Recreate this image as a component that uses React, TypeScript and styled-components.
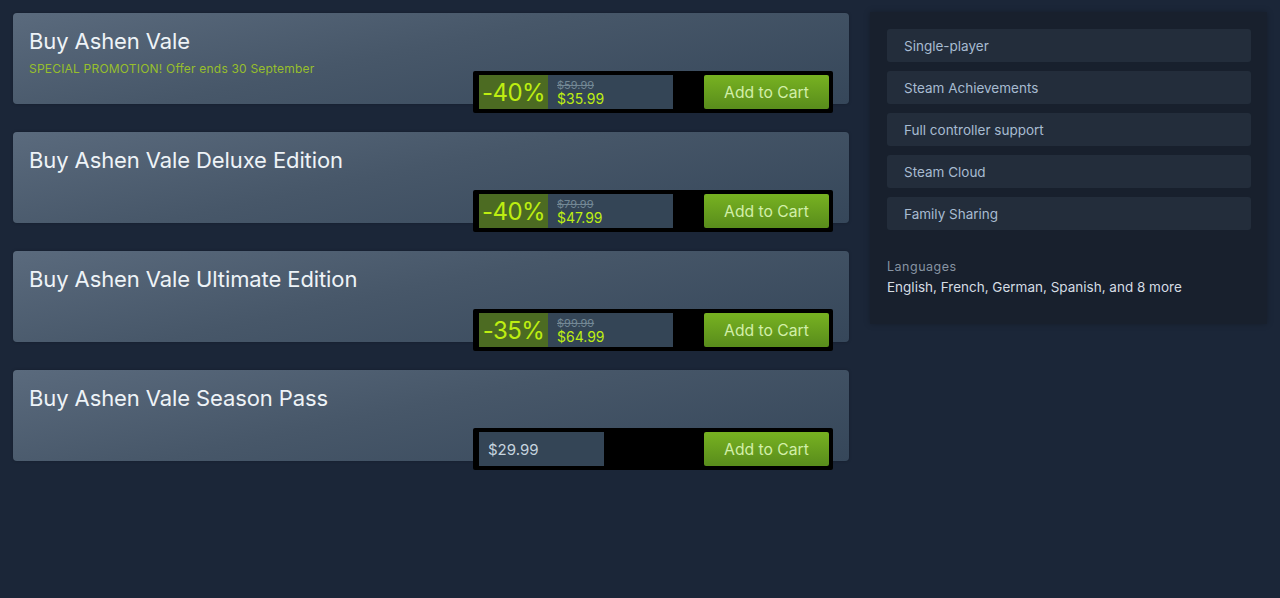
import styled, { createGlobalStyle } from 'styled-components';

const GlobalStyle = createGlobalStyle`
  html, body {
    margin: 0;
    padding: 0;
    background: #1b2638;
    font-family: Inter, "Noto Sans", sans-serif;
  }
`;

const Page = styled.div`
  display: flex;
  gap: 21px;
  padding: 13px 13px 0 13px;
  min-height: 598px;
  box-sizing: border-box;
  align-items: flex-start;
`;

const PurchaseColumn = styled.div`
  width: 836px;
  display: flex;
  flex-direction: column;
  gap: 28px;
`;

const PurchaseCard = styled.div`
  position: relative;
  height: 91px;
  box-sizing: border-box;
  padding: 15px 16px;
  border-radius: 4px;
  background: linear-gradient(168deg, #5a6a7d 0%, #475769 45%, #36475a 100%);
  box-shadow: 0 0 3px rgba(0, 0, 0, 0.25);
`;

const CardTitle = styled.h1`
  margin: 0;
  font-size: 22px;
  font-weight: 400;
  line-height: 26px;
  letter-spacing: -0.1px;
  color: #eef3f7;
`;

const PromoNote = styled.div`
  margin-top: 7px;
  font-size: 12px;
  letter-spacing: 0.2px;
  color: #97bf2c;
`;

const ActionBar = styled.div`
  position: absolute;
  right: 16px;
  bottom: -9px;
  width: 360px;
  height: 42px;
  box-sizing: border-box;
  padding: 4px 4px 4px 6px;
  background: #000;
  border-radius: 2px;
  display: flex;
  align-items: stretch;
  justify-content: space-between;
`;

const PriceGroup = styled.div`
  display: flex;
`;

const DiscountPct = styled.div`
  width: 69px;
  background: #4c6b22;
  color: #beee11;
  font-size: 24px;
  line-height: 35px;
  text-align: center;
  letter-spacing: -0.6px;
`;

const PriceBox = styled.div<{ $single?: boolean }>`
  width: 125px;
  box-sizing: border-box;
  background: #344556;
  padding: 0 9px;
  display: flex;
  flex-direction: column;
  justify-content: center;
  ${p => p.$single && 'font-size: 15px; color: #c6d4df;'}
`;

const OriginalPrice = styled.div`
  font-size: 11px;
  line-height: 12px;
  margin-top: 2px;
  color: #738895;
  text-decoration: line-through;
`;

const FinalPrice = styled.div`
  font-size: 14px;
  line-height: 16px;
  color: #beee11;
`;

const CartButton = styled.button`
  width: 125px;
  border: none;
  border-radius: 2px;
  background: linear-gradient(to bottom, #76b021 5%, #5a8e1c 95%);
  color: #d2efa9;
  font-family: inherit;
  font-size: 15.7px;
  padding: 0;
  cursor: pointer;
`;

const Sidebar = styled.div`
  width: 397px;
  margin-top: -1px;
  box-sizing: border-box;
  padding: 17px 16px 29px 17px;
  background: #18202d;
  box-shadow: 0 0 6px rgba(0, 0, 0, 0.25);
`;

const FeatureList = styled.div`
  display: flex;
  flex-direction: column;
  gap: 9px;
`;

const FeatureItem = styled.div`
  height: 33px;
  box-sizing: border-box;
  padding: 0 17px;
  border-radius: 3px;
  background: #232d3b;
  color: #a7bbd1;
  font-size: 13.5px;
  display: flex;
  align-items: center;
`;

const LangLabel = styled.div`
  margin-top: 29px;
  font-size: 12.5px;
  letter-spacing: 0.5px;
  color: #8794a3;
`;

const LangText = styled.div`
  margin-top: 5px;
  font-size: 13.5px;
  color: #d5dce3;
`;

type Offer = {
  title: string;
  promo?: string;
  pct?: string;
  was?: string;
  now: string;
};

const offers: Offer[] = [
  {
    title: 'Buy Ashen Vale',
    promo: 'SPECIAL PROMOTION! Offer ends 30 September',
    pct: '-40%',
    was: '$59.99',
    now: '$35.99',
  },
  { title: 'Buy Ashen Vale Deluxe Edition', pct: '-40%', was: '$79.99', now: '$47.99' },
  { title: 'Buy Ashen Vale Ultimate Edition', pct: '-35%', was: '$99.99', now: '$64.99' },
  { title: 'Buy Ashen Vale Season Pass', now: '$29.99' },
];

const features = [
  'Single-player',
  'Steam Achievements',
  'Full controller support',
  'Steam Cloud',
  'Family Sharing',
];

function OfferCard({ offer }: { offer: Offer }) {
  return (
    <PurchaseCard>
      <CardTitle>{offer.title}</CardTitle>
      {offer.promo && <PromoNote>{offer.promo}</PromoNote>}
      <ActionBar>
        <PriceGroup>
          {offer.pct ? (
            <>
              <DiscountPct>{offer.pct}</DiscountPct>
              <PriceBox>
                <OriginalPrice>{offer.was}</OriginalPrice>
                <FinalPrice>{offer.now}</FinalPrice>
              </PriceBox>
            </>
          ) : (
            <PriceBox $single>{offer.now}</PriceBox>
          )}
        </PriceGroup>
        <CartButton>Add to Cart</CartButton>
      </ActionBar>
    </PurchaseCard>
  );
}

export default function App() {
  return (
    <>
      <GlobalStyle />
      <Page>
        <PurchaseColumn>
          {offers.map(o => (
            <OfferCard key={o.title} offer={o} />
          ))}
        </PurchaseColumn>
        <Sidebar>
          <FeatureList>
            {features.map(f => (
              <FeatureItem key={f}>{f}</FeatureItem>
            ))}
          </FeatureList>
          <LangLabel>Languages</LangLabel>
          <LangText>English, French, German, Spanish, and 8 more</LangText>
        </Sidebar>
      </Page>
    </>
  );
}
